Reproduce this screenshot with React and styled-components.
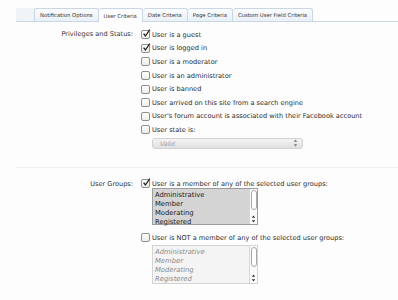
import styled, { createGlobalStyle } from "styled-components"

const GlobalStyle = createGlobalStyle`
  html, body {
    margin: 0;
    padding: 0;
    background: #fdfdfe;
  }
  body {
    font-family: "DejaVu Sans", Verdana, sans-serif;
    color: #2b2b2b;
  }
`

const tabs = [
  "Notification Options",
  "User Criteria",
  "Date Criteria",
  "Page Criteria",
  "Custom User Field Criteria",
]

const privileges = [
  { label: "User is a guest", checked: true },
  { label: "User is logged in", checked: true },
  { label: "User is a moderator" },
  { label: "User is an administrator" },
  { label: "User is banned" },
  { label: "User arrived on this site from a search engine" },
  { label: "User's forum account is associated with their Facebook account" },
  { label: "User state is:" },
]

const groups = ["Administrative", "Member", "Moderating", "Registered"]

function Checkbox({ checked }) {
  return (
    <Box>
      {checked ? (
        <svg width="9" height="9" viewBox="0 0 9 9">
          <path d="M1.6 4.6 L3.4 7 L7.8 0.6" fill="none" stroke="#222" strokeWidth="1.3" />
        </svg>
      ) : null}
    </Box>
  )
}

function ListBox({ items, disabled }) {
  return (
    <List disabled={disabled}>
      <ListItems>
        {items.map(item => (
          <ListItem key={item} disabled={disabled}>
            {item}
          </ListItem>
        ))}
      </ListItems>
      <Scroll>
        <Thumb />
        <Arrows>
          <svg width="5" height="8" viewBox="0 0 5 8">
            <path d="M2.5 0.5 L4.2 2.8 H0.8 Z M2.5 7.5 L4.2 5.2 H0.8 Z" fill="#333" />
          </svg>
        </Arrows>
      </Scroll>
    </List>
  )
}

export default function App() {
  return (
    <>
      <GlobalStyle />
      <Page>
        <TabStrip>
          {tabs.map(tab => (
            <Tab key={tab} active={tab === "User Criteria"}>
              {tab}
            </Tab>
          ))}
        </TabStrip>

        <Section>
          <Label>Privileges and Status:</Label>
          <Controls>
            {privileges.map(p => (
              <CheckRow key={p.label}>
                <Checkbox checked={p.checked} />
                <span>{p.label}</span>
              </CheckRow>
            ))}
            <Select>
              <span>Valid</span>
              <svg width="5" height="8" viewBox="0 0 5 8">
                <path d="M2.5 0.5 L4.2 2.8 H0.8 Z M2.5 7.5 L4.2 5.2 H0.8 Z" fill="#777" />
              </svg>
            </Select>
          </Controls>
        </Section>

        <Divider />

        <Section second>
          <Label compact>User Groups:</Label>
          <Controls>
            <CheckRow compact>
              <Checkbox checked />
              <span>User is a member of any of the selected user groups:</span>
            </CheckRow>
            <ListBox items={groups} />
            <CheckRow compact spaced>
              <Checkbox />
              <span>User is NOT a member of any of the selected user groups:</span>
            </CheckRow>
            <ListBox items={groups} disabled />
          </Controls>
        </Section>
      </Page>
    </>
  )
}

const Page = styled.div`
  width: 398px;
  height: 300px;
  overflow: hidden;
  padding-top: 8px;
  box-sizing: border-box;
`

const TabStrip = styled.div`
  margin-left: 16px;
  height: 13px;
  padding-left: 18px;
  display: flex;
  align-items: flex-end;
  border-bottom: 1px solid #c9d7e4;
  background: linear-gradient(to right, #eef3f8, #fdfdfe 40%);
`

const Tab = styled.div`
  height: ${({ active }) => (active ? "13px" : "12px")};
  margin-bottom: ${({ active }) => (active ? "-1px" : "0")};
  padding: 0 5px;
  display: flex;
  align-items: center;
  font-size: 5.3px;
  color: #333;
  white-space: nowrap;
  border: 1px solid #c9d7e4;
  border-bottom: none;
  border-left-width: 0;
  border-radius: 3px 3px 0 0;
  background: ${({ active }) => (active ? "#fdfdfe" : "linear-gradient(#fbfcfe, #e9f0f7)")};

  &:first-child {
    border-left-width: 1px;
  }
`

const Section = styled.div`
  display: grid;
  grid-template-columns: 117px 1fr;
  column-gap: 8px;
  margin-left: 16px;
  padding-top: ${({ second }) => (second ? "12px" : "6px")};
`

const Label = styled.div`
  text-align: right;
  font-size: 6.6px;
  line-height: ${({ compact }) => (compact ? "8px" : "13.6px")};
  color: #333;
`

const Controls = styled.div`
  display: flex;
  flex-direction: column;
`

const CheckRow = styled.div`
  display: flex;
  align-items: center;
  gap: 2px;
  height: ${({ compact }) => (compact ? "8px" : "13.6px")};
  margin-top: ${({ spaced }) => (spaced ? "9px" : "0")};
  font-size: 6.6px;
  color: #2b2b2b;
  white-space: nowrap;
`

const Box = styled.span`
  position: relative;
  width: 7px;
  height: 7px;
  flex: none;
  border: 1px solid #8f8f8f;
  border-radius: 2px;
  background: linear-gradient(#fff, #ececec);

  svg {
    position: absolute;
    left: 0;
    top: -2px;
  }
`

const Select = styled.div`
  margin: 1px 0 0 11px;
  width: 151px;
  height: 11px;
  box-sizing: border-box;
  padding: 0 4px 0 7px;
  display: flex;
  align-items: center;
  justify-content: space-between;
  border: 1px solid #d2d2d2;
  border-radius: 3px;
  background: linear-gradient(#f4f4f4, #e0e0e0);
  font-size: 6.2px;
  font-style: italic;
  color: #9a9a9a;
`

const Divider = styled.div`
  margin: 18px 0 0 16px;
  height: 1px;
  background: #eceff3;
`

const List = styled.div`
  margin: 0 0 0 11px;
  width: 106px;
  height: ${({ disabled }) => (disabled ? "39px" : "37px")};
  margin-top: ${({ disabled }) => (disabled ? "3px" : "0")};
  box-sizing: border-box;
  display: flex;
  border: 1px solid ${({ disabled }) => (disabled ? "#d4d4d4" : "#9d9d9d")};
  background: ${({ disabled }) => (disabled ? "#f4f4f4" : "#d4d4d4")};
`

const ListItems = styled.div`
  flex: 1;
  padding: 2px 0 0 2px;
`

const ListItem = styled.div`
  height: 9px;
  line-height: 9px;
  font-size: 6.8px;
  font-style: ${({ disabled }) => (disabled ? "italic" : "normal")};
  color: ${({ disabled }) => (disabled ? "#8a8a8a" : "#1a1a1a")};
`

const Scroll = styled.div`
  width: 7px;
  display: flex;
  flex-direction: column;
  align-items: center;
  background: #fafafa;
  border-left: 1px solid #d8d8d8;
`

const Thumb = styled.div`
  margin-top: 1px;
  width: 4px;
  height: 18px;
  border: 1px solid #a8a8a8;
  border-radius: 3px;
  background: #fff;
`

const Arrows = styled.div`
  margin-top: auto;
  padding-bottom: 1px;
  line-height: 0;
`
